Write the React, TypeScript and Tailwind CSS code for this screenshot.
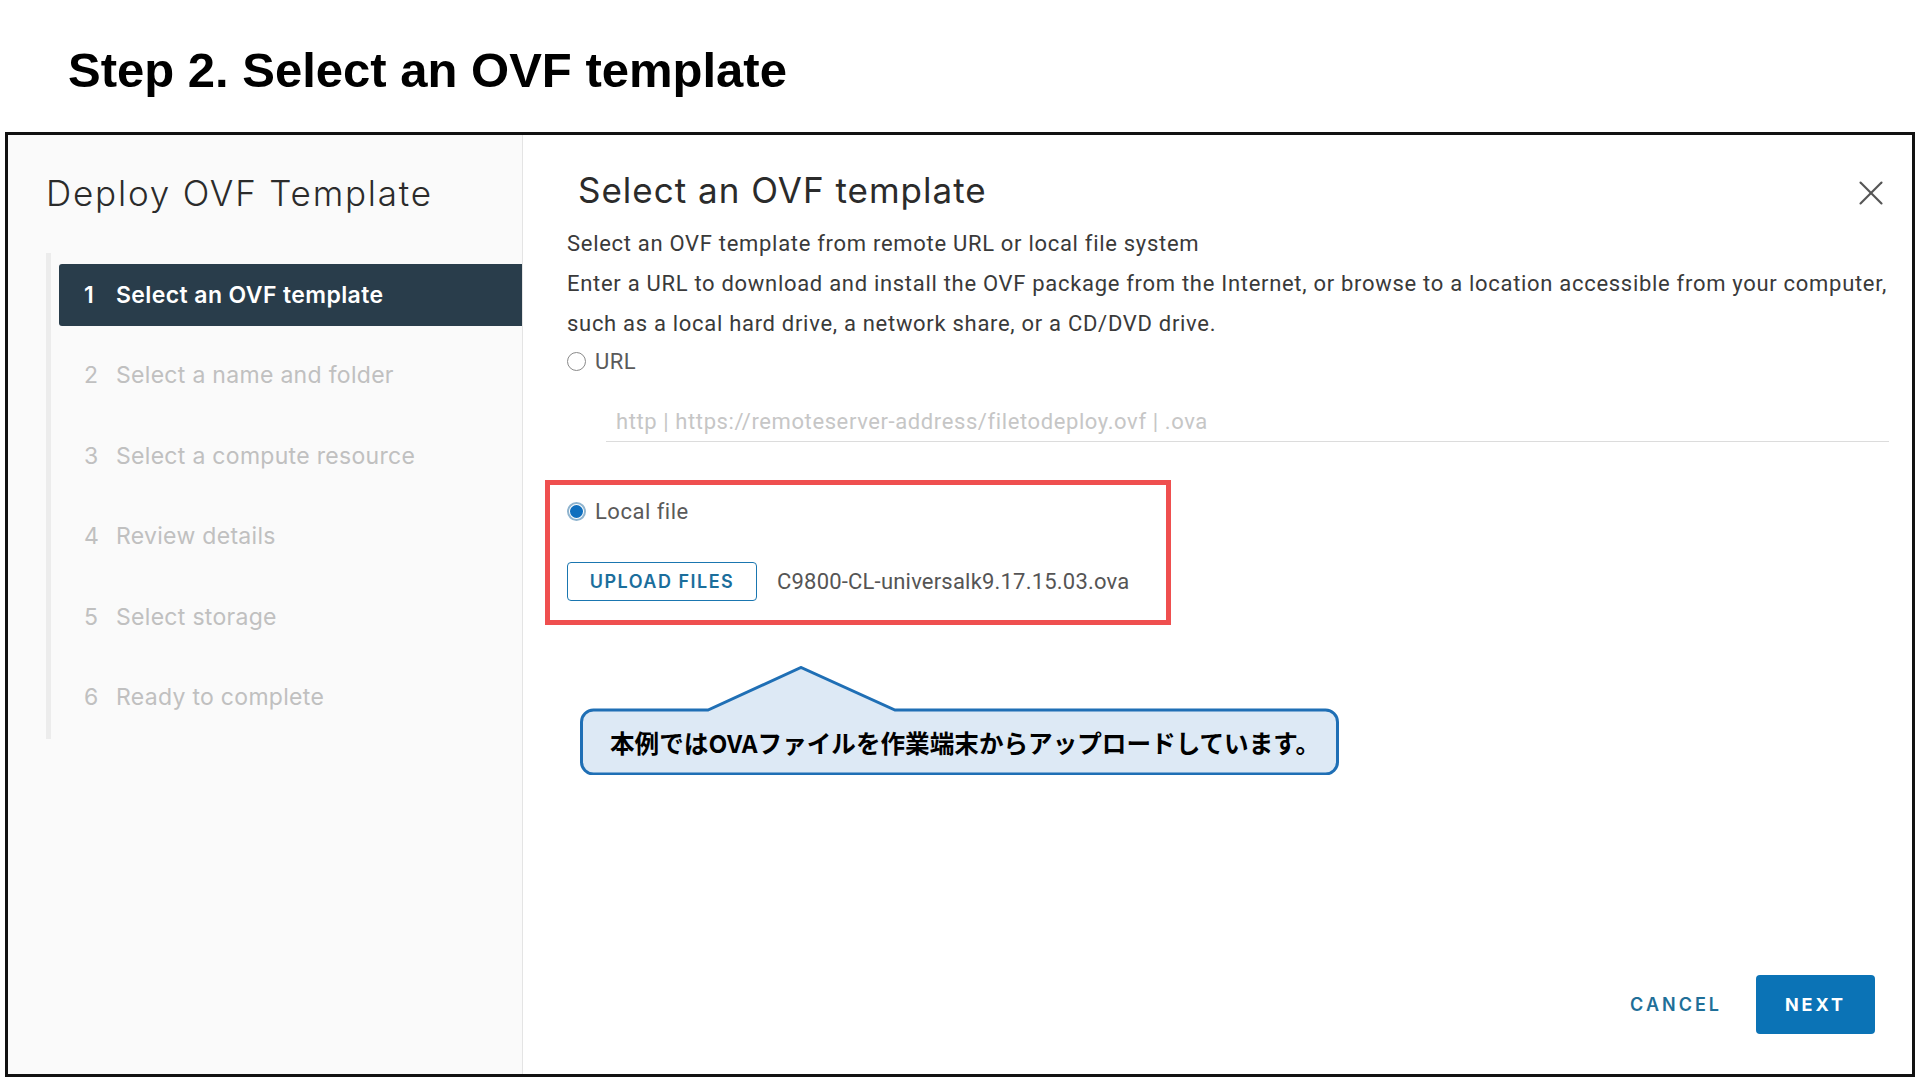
import { X } from "lucide-react";

const steps = [
  "Select an OVF template",
  "Select a name and folder",
  "Select a compute resource",
  "Review details",
  "Select storage",
  "Ready to complete",
];

function Callout() {
  return (
    <div className="relative ml-[13px] mt-[41px] h-[109px] w-[759px]">
      <svg className="absolute inset-0" width="759" height="109" viewBox="0 0 759 109">
        <path
          d="M 13.5 44 H 128 L 221 1.5 L 315 44 H 745.5 A 12 12 0 0 1 757.5 56 V 96 A 12 12 0 0 1 745.5 108 H 13.5 A 12 12 0 0 1 1.5 96 V 56 A 12 12 0 0 1 13.5 44 Z"
          fill="#dde9f5"
          stroke="#1f6fb5"
          strokeWidth="3"
          strokeLinejoin="miter"
        />
      </svg>
      <div className="absolute left-[30px] top-[44px] flex h-[64px] items-center whitespace-nowrap text-[24.6px] font-bold text-black [font-family:'Noto_Sans_CJK_JP',sans-serif]">
        本例ではOVAファイルを作業端末からアップロードしています。
      </div>
    </div>
  );
}

export default function App() {
  return (
    <div className="h-[1080px] w-[1920px] overflow-hidden bg-white">
      <h1 className="h-[132px] pl-[68px] pt-[46px] text-[49px] font-bold leading-none text-black [font-family:'Liberation_Sans',Arial,sans-serif]">
        Step 2. Select an OVF template
      </h1>

      <div className="ml-[5px] flex h-[945px] w-[1910px] border-[3px] border-[#111]">
        {/* wizard steps */}
        <aside className="w-[515px] shrink-0 border-r border-[#e4e4e4] bg-[#fafafa] [font-family:Inter,sans-serif]">
          <div className="pl-[38px] pt-[41px] text-[35px] font-light leading-none tracking-[1.8px] text-[#2b2b2b]">
            Deploy OVF Template
          </div>
          <div className="ml-[38px] mt-[42px] border-l-[5px] border-[#ececec] pb-[10px] pl-[8px] pt-[11px]">
            <div className="flex flex-col gap-[18.5px]">
              {steps.map((label, i) => (
                <div
                  key={label}
                  className={
                    i === 0
                      ? "flex h-[62px] items-center rounded-l-[3px] bg-[#293d4b] pl-[25px] text-[23px] font-semibold tracking-[0.4px] text-white"
                      : "flex h-[62px] items-center pl-[25px] text-[23px] tracking-[0.3px] text-[#c0c0c0]"
                  }
                >
                  <span className="w-[32px]">{i + 1}</span>
                  <span>{label}</span>
                </div>
              ))}
            </div>
          </div>
        </aside>

        {/* main panel */}
        <main className="flex min-w-0 flex-1 flex-col pl-[44px] [font-family:Roboto,sans-serif]">
          <div className="flex h-[73px] items-center justify-between pr-[20px] pt-[38px]">
            <div className="ml-[11px] h-[35px] text-[35px] leading-none tracking-[1px] text-[#2b2b2b] [font-family:Inter,sans-serif]">
              Select an OVF template
            </div>
            <X className="mt-[5px] h-[42px] w-[42px] shrink-0 text-[#555]" strokeWidth={1.2} />
          </div>

          <p className="mt-[16px] whitespace-nowrap text-[22px] leading-[40px] tracking-[0.7px] text-[#3a3a3a]">
            Select an OVF template from remote URL or local file system
            <br />
            Enter a URL to download and install the OVF package from the Internet, or browse to a location accessible from your computer,
            <br />
            such as a local hard drive, a network share, or a CD/DVD drive.
          </p>

          <label className="mt-[5px] flex h-[24px] items-center gap-[9px] text-[22px] tracking-[0.5px] text-[#5a5a5a]">
            <span className="h-[19px] w-[19px] rounded-full border-[1.5px] border-[#8a8a8a] bg-white" />
            URL
          </label>

          <div className="ml-[39px] mt-[37px] w-[1283px] border-b border-[#dcdcdc] pb-[7px] pl-[10px] text-[22px] leading-[24px] tracking-[0.6px] text-[#c6c6c6]">
            http | https://remoteserver-address/filetodeploy.ovf | .ova
          </div>

          <div className="-ml-[22px] mt-[38px] h-[145px] w-[626px] border-[5px] border-[#ef4f4f] pl-[17px] pt-[14px]">
            <label className="flex h-[24px] items-center gap-[9px] text-[22px] tracking-[0.5px] text-[#5a5a5a]">
              <span className="flex h-[19px] w-[19px] items-center justify-center rounded-full border-[2px] border-[#8fb4cf] bg-white">
                <span className="h-[13px] w-[13px] rounded-full bg-[#0f6fbe]" />
              </span>
              Local file
            </label>
            <div className="mt-[39px] flex items-center gap-[20px]">
              <button className="h-[39px] w-[190px] rounded-[4px] border border-[#1a76b0] bg-white text-[18px] font-semibold tracking-[1.5px] text-[#1b6e9c] [font-family:Inter,sans-serif]">
                UPLOAD FILES
              </button>
              <span className="text-[22px] tracking-[0.2px] text-[#555]">C9800-CL-universalk9.17.15.03.ova</span>
            </div>
          </div>

          <Callout />

          <div className="mt-auto flex items-center justify-end pb-[40px] pr-[37px] [font-family:Inter,sans-serif]">
            <button className="mr-[34px] text-[18px] font-semibold tracking-[3px] text-[#1f6f98]">CANCEL</button>
            <button className="h-[59px] w-[119px] rounded-[4px] bg-[#0b73b6] text-[18px] font-bold tracking-[3px] text-white">
              NEXT
            </button>
          </div>
        </main>
      </div>
    </div>
  );
}
